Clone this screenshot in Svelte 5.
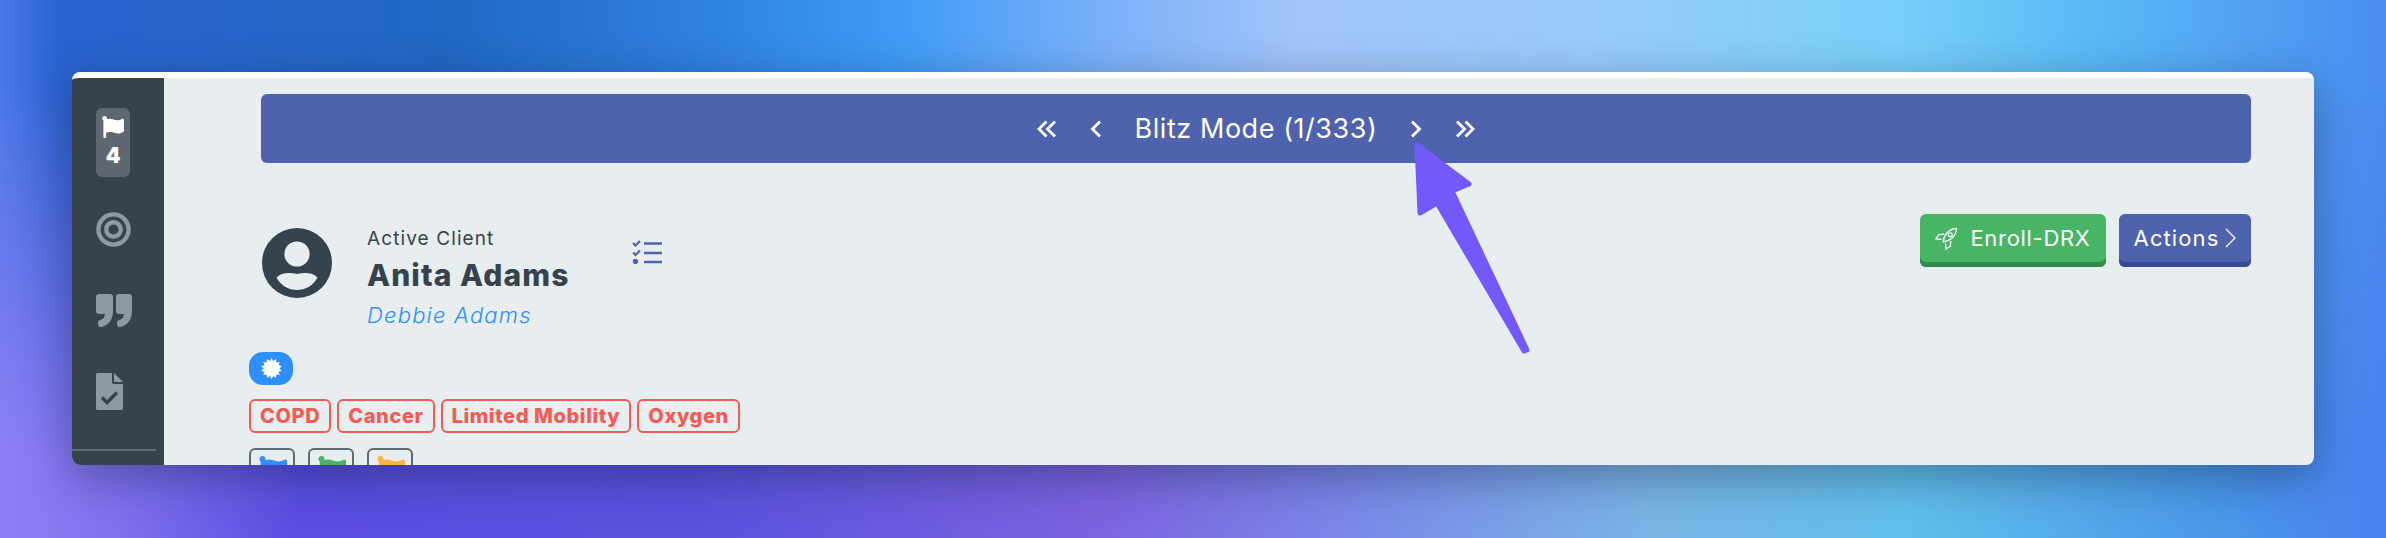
<script>
  const tags = ["COPD", "Cancer", "Limited Mobility", "Oxygen"];
  const flags = ["#2f8ffb", "#48b566", "#fbb347"];
  const flagPath =
    "M349.565 98.783C295.978 98.783 251.721 64 184.348 64c-24.955 0-47.309 4.384-68.045 12.013a55.947 55.947 0 0 0 3.586-23.562C118.117 24.015 94.806 1.206 66.338.048 34.345-1.254 8 24.296 8 56c0 19.026 9.497 35.825 24 45.945V488c0 13.255 10.745 24 24 24h16c13.255 0 24-10.745 24-24v-94.4c28.311-12.064 63.582-22.122 114.435-22.122 53.588 0 97.844 34.783 165.217 34.783 48.169 0 86.667-16.294 122.505-40.858C506.84 359.452 512 349.571 512 339.045v-243.1c0-23.393-24.269-38.87-45.485-29.016-34.338 15.948-76.454 31.854-116.95 31.854z";

  // starburst for the blue badge
  const burst = Array.from({ length: 28 }, (_, i) => {
    const r = i % 2 ? 10.5 : 7.8;
    const a = (i * Math.PI) / 14;
    return `${(10.5 + r * Math.cos(a)).toFixed(2)},${(10.5 + r * Math.sin(a)).toFixed(2)}`;
  }).join(" ");
</script>

<div class="window">
  <aside class="sidebar">
    <div class="flag-box">
      <svg class="flag-icon" viewBox="0 0 512 512"><path d={flagPath} fill="#fff" /></svg>
      <span>4</span>
    </div>
    <svg class="side-target" viewBox="0 0 36 36">
      <circle cx="18" cy="18" r="15.5" fill="none" stroke="#8e9aa2" stroke-width="4.5" />
      <circle cx="18" cy="18" r="7.5" fill="none" stroke="#8e9aa2" stroke-width="4.5" />
    </svg>
    <svg class="side-quote" viewBox="0 0 36 33">
      <path fill="#8e9aa2" d="M3 0h11a3 3 0 0 1 3 3v14c0 9-5 15-12 16a2.500 2.500 0 0 1-3-2.500v-2a2.500 2.500 0 0 1 2-2.500c3-.6 5-3 5-6H3a3 3 0 0 1-3-3V3a3 3 0 0 1 3-3z" />
      <path fill="#8e9aa2" d="M23 0h10a3 3 0 0 1 3 3v14c0 9-5 15-12 16a2.500 2.500 0 0 1-3-2.500v-2a2.500 2.500 0 0 1 2-2.500c3-.6 5-3 5-6h-5a3 3 0 0 1-3-3V3a3 3 0 0 1 3-3z" />
    </svg>
    <svg class="side-file" viewBox="0 0 27 37">
      <path fill="#8e9aa2" d="M1.500 0H16v9a2 2 0 0 0 2 2h9v24.500a1.500 1.500 0 0 1-1.500 1.500h-24A1.500 1.500 0 0 1 0 35.500v-34A1.500 1.500 0 0 1 1.500 0z" />
      <path fill="#8e9aa2" d="M18 0l9 9h-9z" />
      <path fill="none" stroke="#36434c" stroke-width="3.400" d="M6 24.500l5 5 10-10" />
    </svg>
    <div class="side-rule"></div>
  </aside>

  <main class="content">
    <div class="blitz">
      <svg class="chev dbl" viewBox="0 0 20 18"><path d="M9.500 1.500L2 9l7.500 7.500M18 1.500L10.500 9l7.500 7.500" /></svg>
      <svg class="chev one" viewBox="0 0 12 18"><path d="M10 1.500L2.500 9l7.500 7.500" /></svg>
      <span class="blitz-title">Blitz Mode (1/333)</span>
      <svg class="chev one" viewBox="0 0 12 18"><path d="M2 1.500L9.500 9 2 16.500" /></svg>
      <svg class="chev dbl" viewBox="0 0 20 18"><path d="M2 1.500L9.500 9 2 16.500M10.500 1.500L18 9l-7.500 7.500" /></svg>
    </div>

    <div class="client-row">
      <div class="client">
        <svg class="avatar" viewBox="0 0 70 70">
          <circle cx="35" cy="35" r="35" fill="#36434c" />
          <circle cx="35" cy="26" r="12.600" fill="#e8edf0" />
          <path fill="#e8edf0" d="M14.500 49.500C19 45 26 44 35 46c9-2 16-1 20.500 3.500C51 58 43 62 35 62s-16-4-20.500-12.500z" />
        </svg>
        <div class="client-text">
          <div class="status">Active Client</div>
          <div class="name">Anita Adams</div>
          <div class="contact">Debbie Adams</div>
        </div>
        <svg class="checklist" viewBox="0 0 30 24">
          <g fill="none" stroke="#4f62ae" stroke-width="2.600">
            <path d="M12 3.500h18M12 13h18M12 22h18" />
            <path stroke-width="2.200" d="M1 3l2.500 2.500L8 1M1 12.500l2.500 2.500L8 10.500" />
          </g>
          <circle cx="3.500" cy="21.500" r="2.700" fill="#4f62ae" />
        </svg>
      </div>
      <div class="actions">
        <button class="btn green">
          <svg class="rocket" viewBox="0 0 24 24">
            <path d="M8.500 15.500C9 9 14 2 22.500 1.500 22 10 15 15 8.500 15.500z" />
            <circle cx="16" cy="8" r="2" />
            <path d="M9.500 7.500L4 8 1 12.500l6 .5M16.500 14.500L16 20l-4.500 3-.5-6" />
          </svg>
          Enroll-DRX
        </button>
        <button class="btn blue">
          Actions
          <svg class="btn-chev" viewBox="0 0 11 20"><path d="M1 1l9 9-9 9" /></svg>
        </button>
      </div>
    </div>

    <div class="meta">
      <div class="pill">
        <svg viewBox="0 0 21 21"><polygon points={burst} fill="#fff" /></svg>
      </div>
      <div class="tags">
        {#each tags as tag}
          <span class="tag">{tag}</span>
        {/each}
      </div>
      <div class="flags">
        {#each flags as color}
          <div class="flag-btn">
            <svg viewBox="0 0 512 512"><path d={flagPath} fill={color} /></svg>
          </div>
        {/each}
      </div>
    </div>
  </main>

  <svg class="pointer" viewBox="0 0 130 225">
    <path
      d="M12 10L64 49 47 56 122 215 119 216 32 68 15 78z"
      fill="#7359fb"
      stroke="#7359fb"
      stroke-width="5"
      stroke-linejoin="round"
    />
  </svg>
</div>

<style>
  :global(body) {
    margin: 0;
    height: 538px;
    overflow: hidden;
    background: linear-gradient(
      90deg,
      #8f7ff5 0,
      #7f70ee 120px,
      #5a4de0 300px,
      #5a52de 700px,
      #7c63e0 1100px,
      #7a90e8 1400px,
      #7ab5e5 1650px,
      #62c0ea 1900px,
      #4a9ae8 2200px,
      #4a80f0 2386px
    );
  }

  /* the top half of the wallpaper, faded into the bottom half */
  :global(body)::before {
    content: "";
    position: absolute;
    inset: 0;
    height: 538px;
    background: linear-gradient(
      90deg,
      #4a78e8 0,
      #2a63cf 60px,
      #2268c4 450px,
      #2f80e0 700px,
      #3f9bf5 900px,
      #7ab0f8 1100px,
      #a2c5f8 1300px,
      #98cbfa 1600px,
      #78d0f8 1900px,
      #5ab8f5 2100px,
      #4a8cf0 2386px
    );
    mask-image: linear-gradient(to bottom, #000 15%, transparent 85%);
  }

  .window {
    position: relative;
    display: flex;
    width: 2242px;
    height: 393px;
    margin: 0 0 0 72px;
    top: 72px;
    box-sizing: border-box;
    border-top: 6px solid #fff;
    border-radius: 8px;
    overflow: hidden;
    font-family: Inter, "Liberation Sans", sans-serif;
    color: #36434c;
    background: #e8edf0;
    box-shadow: 0 12px 45px rgba(10, 20, 50, 0.38);
  }

  .sidebar {
    position: relative;
    width: 92px;
    flex: none;
    display: flex;
    flex-direction: column;
    align-items: flex-start;
    padding: 30px 0 0 24px;
    box-sizing: border-box;
    background: #36434c;
  }

  .flag-box {
    width: 34px;
    height: 69px;
    border-radius: 6px;
    background: #5f6870;
    display: flex;
    flex-direction: column;
    align-items: center;
    padding-top: 8px;
    box-sizing: border-box;
    color: #fff;
    font-weight: 900;
    font-size: 21px;
    line-height: 22px;
  }

  .flag-icon {
    width: 22px;
    height: 22px;
    margin-bottom: 7px;
  }

  .side-target {
    width: 35px;
    height: 35px;
    margin-top: 35px;
  }

  .side-quote {
    width: 36px;
    height: 33px;
    margin-top: 47px;
  }

  .side-file {
    width: 27px;
    height: 37px;
    margin-top: 46px;
  }

  .side-rule {
    width: 84px;
    height: 2px;
    margin: 39px 0 0 -24px;
    background: #5f6a72;
  }

  .content {
    flex: 1;
    min-width: 0;
    padding: 16px 63px 0 97px;
  }

  .blitz {
    height: 69px;
    display: flex;
    align-items: center;
    justify-content: center;
    gap: 33px;
    border-radius: 6px;
    background: #4f62ae;
    color: #fff;
  }

  .blitz-title {
    font-size: 27px;
    letter-spacing: 0.55px;
    white-space: nowrap;
  }

  .chev {
    height: 18px;
    fill: none;
    stroke: #fff;
    stroke-width: 2.800;
  }

  .chev.dbl {
    width: 20px;
  }

  .chev.one {
    width: 12px;
  }

  .client-row {
    display: flex;
    justify-content: space-between;
    align-items: flex-start;
    height: 138px;
    margin-top: 51px;
  }

  .client {
    display: flex;
    align-items: flex-start;
    padding: 14px 0 0 1px;
  }

  .avatar {
    width: 70px;
    height: 70px;
    flex: none;
  }

  .client-text {
    width: 265px;
    margin-left: 35px;
    margin-top: -1px;
  }

  .status {
    font-size: 19px;
    letter-spacing: 1.1px;
    line-height: 24px;
  }

  .name {
    margin-top: 4px;
    font-size: 30px;
    font-weight: 800;
    letter-spacing: 1.1px;
    line-height: 40px;
  }

  .contact {
    margin-top: 6px;
    font-size: 22px;
    font-style: italic;
    font-weight: 300;
    letter-spacing: 1.2px;
    line-height: 28px;
    color: #2f8ffb;
  }

  .checklist {
    width: 30px;
    height: 24px;
    margin-top: 12px;
  }

  .actions {
    display: flex;
    gap: 13px;
  }

  .btn {
    display: flex;
    align-items: center;
    height: 53px;
    padding: 0 0 5px;
    box-sizing: border-box;
    border: none;
    border-radius: 6px;
    color: #fff;
    font-family: inherit;
    font-size: 22px;
  }

  .btn.green {
    width: 186px;
    justify-content: center;
    gap: 12px;
    letter-spacing: 0.7px;
    background: #48b566;
    box-shadow: inset 0 -5px 0 #338a4c;
  }

  .btn.blue {
    width: 132px;
    justify-content: center;
    gap: 6px;
    letter-spacing: 1.1px;
    background: #4f62ae;
    box-shadow: inset 0 -5px 0 #394a92;
  }

  .rocket {
    width: 23px;
    height: 23px;
    fill: none;
    stroke: #fff;
    stroke-width: 1.300;
  }

  .btn-chev {
    width: 11px;
    height: 20px;
    fill: none;
    stroke: #fff;
    stroke-width: 1.300;
  }

  .meta {
    margin-left: -12px;
    display: flex;
    flex-direction: column;
    align-items: flex-start;
  }

  .pill {
    width: 44px;
    height: 33px;
    border-radius: 14px;
    background: #2f8ffb;
    display: flex;
    align-items: center;
    justify-content: center;
  }

  .pill svg {
    width: 21px;
    height: 21px;
  }

  .tags {
    display: flex;
    gap: 6px;
    margin-top: 14px;
  }

  .tag {
    height: 34px;
    padding: 0 9px;
    box-sizing: border-box;
    display: flex;
    align-items: center;
    border: 2px solid #f25c54;
    border-radius: 6px;
    color: #f25c54;
    font-size: 20px;
    font-weight: 800;
    letter-spacing: 0.6px;
  }

  .flags {
    display: flex;
    gap: 13px;
    margin-top: 15px;
  }

  .flag-btn {
    width: 46px;
    height: 46px;
    padding: 6px 0 0 8px;
    box-sizing: border-box;
    border: 2px solid #5f6b73;
    border-radius: 6px;
  }

  .flag-btn svg {
    display: block;
    width: 28px;
    height: 28px;
  }

  .pointer {
    position: absolute;
    left: 1333px;
    top: 57px;
    width: 130px;
    height: 225px;
  }
</style>
